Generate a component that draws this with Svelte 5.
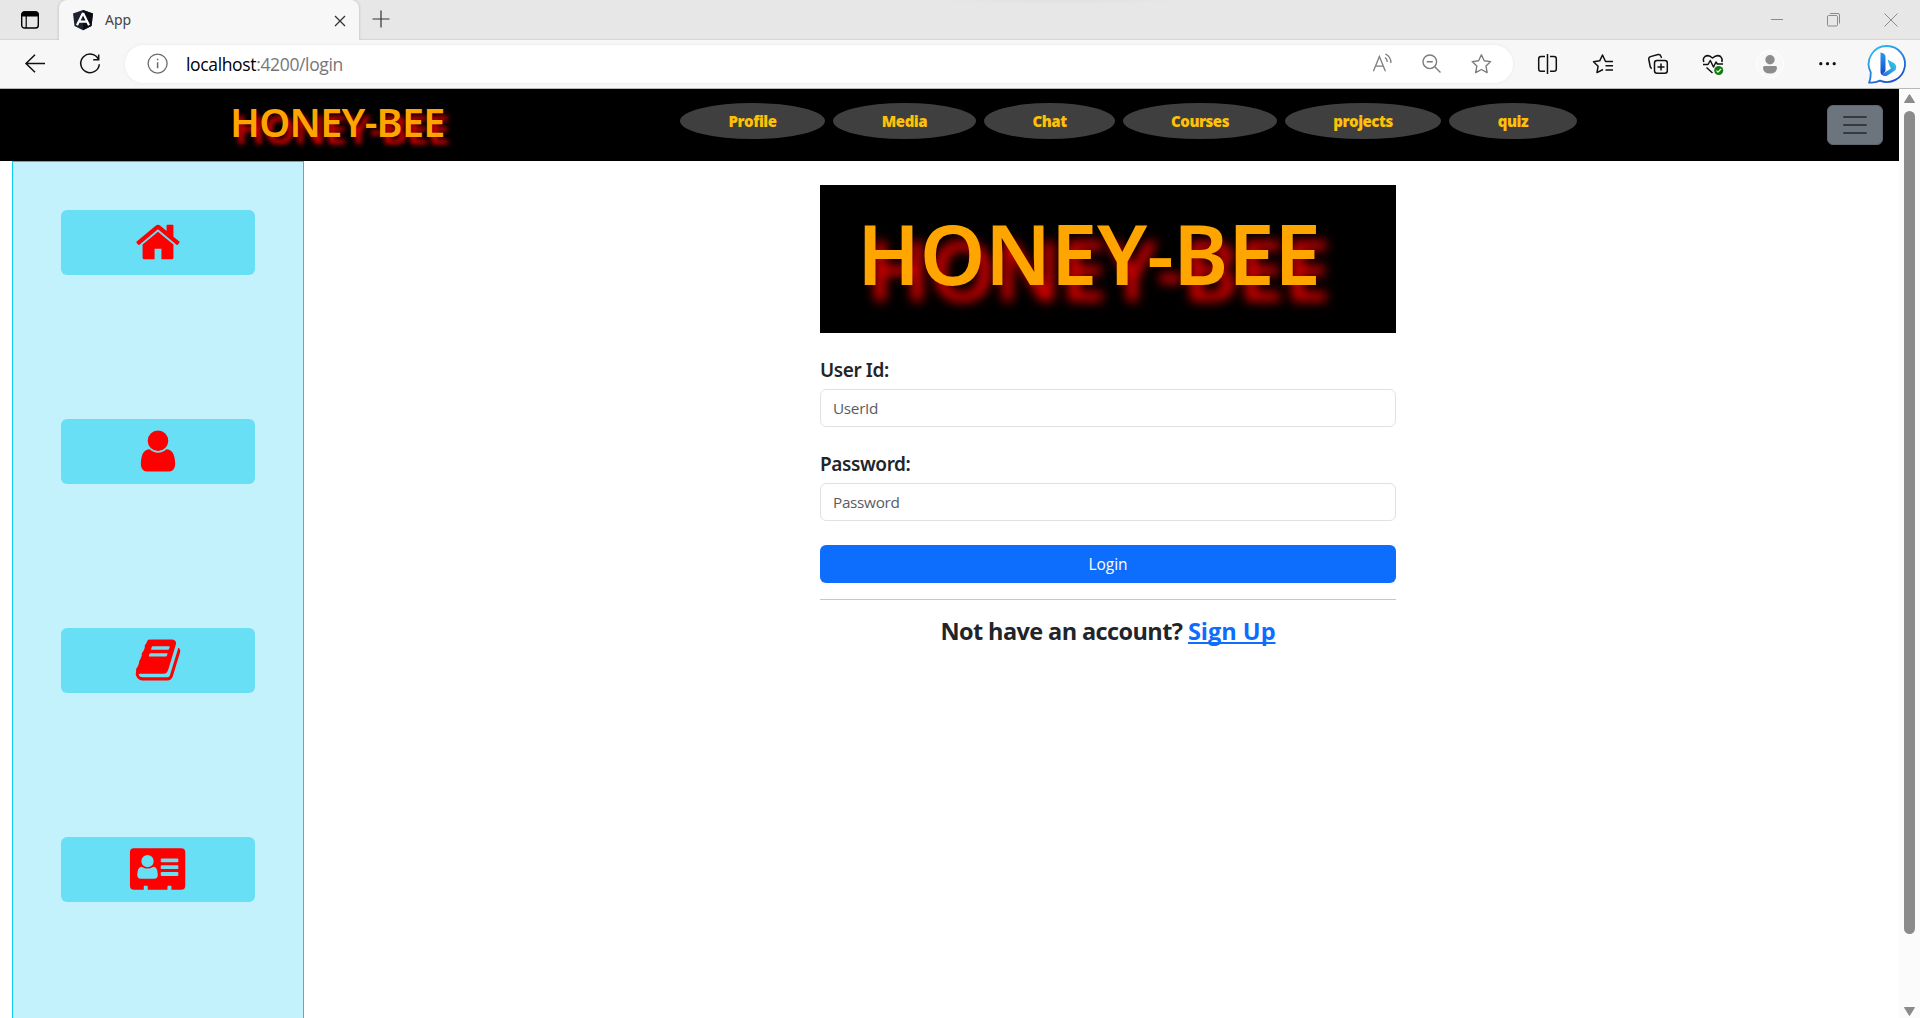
<script>
  const links = [
    { label: 'Profile', width: 145 },
    { label: 'Media', width: 143 },
    { label: 'Chat', width: 131 },
    { label: 'Courses', width: 154 },
    { label: 'projects', width: 156 },
    { label: 'quiz', width: 128 }
  ];

  const shortcuts = [
    {
      name: 'Home',
      box: '0 0 1792 1792',
      d: 'M1472 992v480q0 26-19 45t-45 19h-384v-384h-256v384h-384q-26 0-45-19t-19-45v-480q0-1 .5-3t.5-3l575-474 575 474q1 2 1 6zm223-69l-62 74q-8 9-21 11h-3q-13 0-21-7l-692-577-692 577q-12 8-24 7-13-2-21-11l-62-74q-8-10-7-23.5t11-21.5l719-599q32-26 76-26t76 26l244 204v-195q0-14 9-23t23-9h192q14 0 23 9t9 23v408l219 182q10 8 11 21.5t-7 23.5z'
    },
    {
      name: 'Account',
      box: '0 0 1792 1792',
      d: 'M1536 1399q0 109-62.5 187t-150.5 78h-854q-88 0-150.5-78t-62.5-187q0-85 8.5-160.5t31.5-152 58.5-131 94-89 134.5-34.5q131 128 313 128t313-128q76 0 134.5 34.5t94 89 58.5 131 31.5 152 8.5 160.5zm-256-887q0 159-112.5 271.5t-271.5 112.5-271.5-112.5-112.5-271.5 112.5-271.5 271.5-112.5 271.5 112.5 112.5 271.5z'
    },
    {
      name: 'Library',
      box: '0 0 1792 1792',
      d: 'M1703 478q40 57 18 129l-275 906q-19 64-76.5 107.5t-122.5 43.5h-923q-77 0-148.5-53.5t-99.5-131.5q-24-67-2-127 0-4 3-27t4-37q1-8-3-21.5t-3-19.5q2-11 8-21t16.5-23.5 16.5-23.5q23-38 45-91.5t30-91.5q3-10 .5-30t-.5-28q3-11 17-28t17-23q21-36 42-92t25-90q1-9-2.5-32t.5-28q4-13 22-30.5t22-22.5q19-26 42.5-84.5t27.5-96.5q1-8-3-25.5t-2-26.5q2-8 9-18t18-23 17-21q8-12 16.5-30.5t15-35 16-36 19.5-32 26.5-23.5 36-11.5 47.5 5.5l-1 3q38-9 51-9h761q74 0 114 56t18 130l-274 906q-36 119-71.5 153.5t-128.5 34.5h-869q-27 0-38 15-11 16-1 43 24 70 144 70h923q29 0 56-15.5t35-41.5l300-987q7-22 5-57 38 15 59 43zm-1064 2q-4 13 2 22.5t20 9.5h608q13 0 25.5-9.5t16.5-22.5l21-64q4-13-2-22.5t-20-9.5h-608q-13 0-25.5 9.5t-16.5 22.5zm-83 256q-4 13 2 22.5t20 9.5h608q13 0 25.5-9.5t16.5-22.5l21-64q4-13-2-22.5t-20-9.5h-608q-13 0-25.5 9.5t-16.5 22.5z'
    },
    {
      name: 'Contacts',
      box: '-4 -3.2 64 48.600',
      d: 'M4 0H52Q56 0 56 4V38Q56 42 52 42H42V38.7Q42 38 41.3 38H38.7Q38 38 38 38.7V42H18V38.7Q18 38 17.3 38H14.7Q14 38 14 38.7V42H4Q0 42 0 38V4Q0 0 4 0ZM17.8 7A6.1 6.1 0 0 0 17.8 19.4A6.1 6.1 0 0 0 17.8 7ZM12 18.7Q7.4 19 7.4 27Q7.4 31 11 31H24.6Q28.2 31 28.2 27Q28.2 19 23.6 18.7Q21 20.6 17.8 20.6Q14.6 20.6 12 18.7ZM32 10.5Q31.2 10.5 31.2 11.3V13.5Q31.2 14.3 32 14.3H48.2Q49 14.3 49 13.5V11.3Q49 10.5 48.2 10.5ZM32 17.3Q31.2 17.3 31.2 18.1V20.3Q31.2 21.1 32 21.1H48.2Q49 21.1 49 20.3V18.1Q49 17.3 48.2 17.3ZM32 24.2Q31.2 24.2 31.2 25V27.3Q31.2 28.1 32 28.1H48.2Q49 28.1 49 27.3V25Q49 24.2 48.2 24.2Z'
    }
  ];

  let userId = $state('');
  let password = $state('');
</script>

<div class="window">
  <div class="tabbar">
    <svg class="spaces" width="20" height="20" viewBox="0 0 20 20">
      <rect x="1.7" y="2" width="16.6" height="16" rx="2.8" fill="none" stroke="#000" stroke-width="1.4" />
      <path d="M1.5 6.5V4.5Q1.5 1.3 4.5 1.3H15.5Q18.5 1.3 18.5 4.5V6.5Z" fill="#000" />
      <path d="M6.2 6V18" stroke="#000" stroke-width="1.2" />
    </svg>
    <div class="tab">
      <svg width="22" height="22" viewBox="0 0 22 22">
        <path d="M11 1L21 4.400L19.500 17L11 21.200L2.500 17L1 4.400Z" fill="#1e2230" />
        <path d="M11 1L21 4.400L19.500 17L11 21.200Z" fill="#0a0c14" />
        <path d="M11 4L5 16.200M11 4L17 16.200M7.400 12.600H14.600" fill="none" stroke="#fff" stroke-width="2.200" />
      </svg>
      <span class="tab-title">App</span>
      <svg class="tab-close" width="12" height="12" viewBox="0 0 12 12">
        <path d="M1 1L11 11M11 1L1 11" stroke="#333" stroke-width="1.3" />
      </svg>
    </div>
    <svg class="plus" width="18" height="18" viewBox="0 0 18 18">
      <path d="M9 .5V17.5M.5 9H17.5" stroke="#333" stroke-width="1.2" />
    </svg>
    <div class="controls">
      <svg width="16" height="16" viewBox="0 0 16 16"><path d="M2 7.5H14" stroke="#8b8b8b" /></svg>
      <svg width="16" height="16" viewBox="0 0 16 16" fill="none" stroke="#8b8b8b">
        <rect x="1.5" y="3.5" width="10" height="10.5" rx="1.2" />
        <path d="M4 1.5H12Q13.5 1.5 13.5 3V11.5" />
      </svg>
      <svg width="16" height="16" viewBox="0 0 16 16"><path d="M1.500 1.500L14.500 14.500M14.500 1.500L1.500 14.500" stroke="#8b8b8b" /></svg>
    </div>
  </div>

  <div class="toolbar">
    <svg class="back" width="24" height="24" viewBox="0 0 24 24" fill="none" stroke="#111" stroke-width="1.5">
      <path d="M22 11.500H3M12 2.800L3 11.500L12 20.200" />
    </svg>
    <svg class="reload" width="24" height="24" viewBox="0 0 24 24" fill="none" stroke="#111" stroke-width="1.5">
      <path d="M20.500 7.500A9.300 9.300 0 1 0 21.300 12.200M20.700 2.500V7.800H15.200" />
    </svg>
    <div class="address">
      <svg width="22" height="22" viewBox="0 0 22 22" fill="none" stroke="#6b6b6b" stroke-width="1.3">
        <circle cx="10.6" cy="10.600" r="9.500" />
        <path d="M10.600 9.200V15.200M10.600 5.700V7.200" stroke-width="1.500" />
      </svg>
      <span class="url"><b>localhost</b>:4200/login</span>
      <div class="address-tools">
        <svg width="24" height="24" viewBox="0 0 24 24" fill="none" stroke="#7c7c7c" stroke-width="1.3">
          <path d="M2.400 19.300L8.400 4.500L14.400 19.300M4.400 14.200H12.400M14 5.500Q16.300 7 16.300 10M14.300 2Q20 4.500 20 11" />
        </svg>
        <svg width="24" height="24" viewBox="0 0 24 24" fill="none" stroke="#7c7c7c" stroke-width="1.4">
          <circle cx="9.800" cy="9.800" r="6.800" /><path d="M14.700 14.700L20.500 20.500M6.800 9.800H12.800" />
        </svg>
        <svg width="24" height="24" viewBox="0 0 24 24" fill="none" stroke="#7c7c7c" stroke-width="1.4" stroke-linejoin="round">
          <path d="M12.400 2.800L15.200 8.700L21.600 9.600L17 14.100L18.100 20.600L12.400 17.500L6.700 20.600L7.800 14.100L3.200 9.600L9.600 8.700Z" />
        </svg>
      </div>
    </div>
    <div class="actions">
      <svg width="24" height="24" viewBox="0 0 24 24" fill="none" stroke="#111" stroke-width="1.5">
        <path d="M9 4.500H5Q2.700 4.500 2.700 6.800V17Q2.700 19.300 5 19.300H9M14 4.500H18Q20.300 4.500 20.300 6.800V17Q20.300 19.300 18 19.300H14M11.500 2V22" />
      </svg>
      <svg width="24" height="24" viewBox="0 0 24 24" fill="none" stroke="#111" stroke-width="1.5" stroke-linejoin="round">
        <path d="M22 9.500H14.500L11.500 3L8.700 8.800L2.500 9.700L7.100 14.200L6 20.600L12 17.500M14.500 13.800H22M14.500 18H22" />
      </svg>
      <svg width="24" height="24" viewBox="0 0 24 24" fill="none" stroke="#111" stroke-width="1.5">
        <rect x="8.5" y="8.5" width="12.8" height="12.8" rx="2.5" />
        <path d="M15 11.500V18.500M11.500 15H18.500M5.800 16.500Q4.500 16 4.200 14.500L2.800 7.500Q2.400 5.300 4.500 4.600L12 2.600Q14.200 2.300 15 4.400L15.500 6" />
      </svg>
      <svg width="24" height="24" viewBox="0 0 24 24" fill="none" stroke="#111" stroke-width="1.5" stroke-linejoin="round">
        <path d="M2.800 10Q1.500 6.500 4 4.500Q7.500 2.200 11.500 6Q16 2.200 19.500 4.500Q22 6.800 20.800 10M2 12.500H7L9.300 8.500L12.500 15L15 10L16.300 12H22M5.500 15.500L11.500 21" />
        <circle cx="17.7" cy="18.5" r="4.5" fill="#107c10" stroke="none" />
        <path d="M15.500 18.700L17 20.200L20 17" stroke="#fff" stroke-width="1.2" />
      </svg>
      <svg class="avatar" width="28" height="28" viewBox="0 0 28 28">
        <circle cx="14" cy="14" r="13.5" fill="#f8f8f8" stroke="#fff" />
        <circle cx="14" cy="9.7" r="4.7" fill="#8c8c8c" />
        <path d="M8.500 16H19.500Q21 16 21 17.500Q21 23.500 14 23.500Q7 23.500 7 17.500Q7 16 8.500 16Z" fill="#8c8c8c" />
      </svg>
      <svg class="dots" width="24" height="24" viewBox="0 0 24 24" fill="#111">
        <circle cx="4.8" cy="11.7" r="1.6" /><circle cx="11.5" cy="11.7" r="1.6" /><circle cx="18.2" cy="11.7" r="1.6" />
      </svg>
      <svg class="bing" width="40" height="40" viewBox="0 0 40 40">
        <defs>
          <linearGradient id="ring" x1="0" y1="0" x2=".6" y2="1"><stop offset="0" stop-color="#2fc8f4" /><stop offset="1" stop-color="#1b50d0" /></linearGradient>
          <linearGradient id="stem" x1="0" y1="0" x2="0" y2="1"><stop offset="0" stop-color="#2b9af3" /><stop offset="1" stop-color="#1646c8" /></linearGradient>
          <linearGradient id="bowl" x1="1" y1="0" x2="0" y2="1"><stop offset="0" stop-color="#35d8e0" /><stop offset="1" stop-color="#2368e8" /></linearGradient>
        </defs>
        <path d="M20 2A18 18 0 1 1 13 36.600Q8 39 2.200 38.500Q3.800 34 3.800 28.500A18 18 0 0 1 20 2Z" fill="#fff" stroke="url(#ring)" stroke-width="1.8" />
        <path d="M13.500 8.500Q18.500 9.300 18.500 13V27L15 31Q13.500 30 13.500 28Z" fill="url(#stem)" />
        <path d="M20.500 15.500L27 19Q30.500 21.500 28.500 26L20.500 31.500Q17 33 14.500 30.500L24 24.500L22.500 21.500Z" fill="url(#bowl)" />
      </svg>
    </div>
  </div>

  <div class="viewport">
    <div class="page">
      <header>
        <span class="brand">HONEY-BEE</span>
        <nav>
          {#each links as link}
            <a href="#top" style:width="{link.width}px">{link.label}</a>
          {/each}
        </nav>
        <button class="toggler" aria-label="Menu"><i></i><i></i><i></i></button>
      </header>
      <div class="body">
        <aside>
          {#each shortcuts as item}
            <button aria-label={item.name}>
              <svg viewBox={item.box} height="48"><path fill-rule="evenodd" d={item.d} /></svg>
            </button>
          {/each}
        </aside>
        <main>
          <form>
            <div class="banner">HONEY-BEE</div>
            <label for="user">User Id:</label>
            <input id="user" type="text" placeholder="UserId" bind:value={userId} />
            <label for="pass">Password:</label>
            <input id="pass" type="password" placeholder="Password" bind:value={password} />
            <button class="login" type="button">Login</button>
            <hr />
            <h4>Not have an account? <a href="#top">Sign Up</a></h4>
          </form>
        </main>
      </div>
    </div>
    <div class="scrollbar">
      <svg width="11" height="9" viewBox="0 0 11 9"><path d="M5.500 .5L10.500 8.500H.5Z" fill="#8b8b8b" stroke="#8b8b8b" stroke-linejoin="round" /></svg>
      <div class="thumb"></div>
      <svg width="11" height="9" viewBox="0 0 11 9"><path d="M5.500 8.500L10.500 .5H.5Z" fill="#8b8b8b" stroke="#8b8b8b" stroke-linejoin="round" /></svg>
    </div>
  </div>
</div>

<style>
  :global(body) { overflow: hidden; }
  * { box-sizing: border-box; }
  svg { display: block; flex: none; }
  .window {
    width: 1920px; height: 1018px; display: flex; flex-direction: column; overflow: hidden;
    font-family: "Open Sans", "Noto Sans", sans-serif; background: #fff; color: #212529;
  }

  .tabbar {
    height: 40px; flex: none; display: flex; border-bottom: 1px solid #d6d6d6;
    background: radial-gradient(ellipse 130px 5px at 1062px 0, #e1e1e1, transparent) #e7e7e7;
  }
  .spaces { margin: 10px 0 0 20px; }
  .tab {
    width: 300px; height: 40px; margin-left: 19px; padding: 0 13px; display: flex; align-items: center;
    background: #f7f7f7; border-radius: 8px 8px 0 0; box-shadow: 0 0 3px rgba(0, 0, 0, .22); clip-path: inset(0 -4px 0 -4px);
  }
  .tab-title { margin: -2px 0 0 11px; font: 14px "Noto Sans", sans-serif; color: #444; }
  .tab-close { margin: 1px 0 0 auto; }
  .plus { margin: 10px 0 0 13px; }
  .controls { margin: 12px 21px 0 auto; display: flex; gap: 41px; }

  .toolbar { height: 49px; flex: none; display: flex; align-items: flex-start; background: #f7f7f7; border-bottom: 1px solid #b8b8b8; }
  .back { margin: 12px 0 0 23px; }
  .reload { margin: 12px 0 0 31px; }
  .address {
    width: 1388px; height: 38px; margin: 5px 0 0 23px; padding: 0 20px 0 22px; display: flex; align-items: center;
    background: #fff; border-radius: 19px; box-shadow: 0 0 4px rgba(0, 0, 0, .06);
  }
  .url { margin: -1px 0 0 17px; font-size: 17.5px; letter-spacing: -.35px; line-height: 38px; color: #767676; }
  .url b { font-weight: 400; color: #000; }
  .address-tools { margin-left: auto; display: flex; gap: 25px; }
  .actions { display: flex; align-items: center; gap: 31px; height: 48px; margin-left: 23px; }
  .dots { margin-left: 1px; }
  .bing { margin-left: -4px; }

  .viewport { flex: 1; display: flex; min-height: 0; }
  .page { flex: 1; display: flex; flex-direction: column; }
  header { height: 72px; flex: none; display: flex; align-items: flex-start; background: #000; padding: 0 16px 0 230px; }
  .brand {
    width: 450px; font: 600 39.5px/67px "Noto Sans", sans-serif; letter-spacing: -.7px;
    color: orange; text-shadow: 5px 7px 5px #dc0000;
  }
  nav { display: flex; gap: 8px; margin-top: 14px; }
  nav a {
    height: 36px; border-radius: 50%; background: #3f3f3f; color: #ffc107; text-align: center; text-decoration: none;
    font-weight: 800; font-size: 15px; line-height: 37px; letter-spacing: -.45px;
  }
  .toggler {
    width: 56px; height: 40px; margin: 16px 0 0 auto; padding: 0; display: flex; flex-direction: column;
    align-items: center; justify-content: center; gap: 6px; background: #6c757d; border: 1px solid #5f676e; border-radius: 6px;
  }
  .toggler i { width: 24px; height: 2px; border-radius: 1px; background: #353a3f; }

  .body { flex: 1; display: flex; gap: 13px; padding-left: 12px; min-height: 0; }
  aside {
    width: 292px; padding-top: 48px; display: flex; flex-direction: column; align-items: center; gap: 144px;
    background: #c3f2fc; border: 1px solid #0dcaf0; border-bottom: 0;
  }
  aside button {
    width: 194px; height: 65px; flex: none; padding: 8px 0 0; display: flex; justify-content: center; align-items: flex-start;
    background: #69dff6; border: 0; border-radius: 6px; fill: red;
  }
  main { flex: 1; display: flex; justify-content: center; padding-top: 24px; }
  form { width: 576px; display: flex; flex-direction: column; }
  .banner {
    height: 148px; margin-bottom: 24px; padding-left: 37px; background: #000; color: orange;
    font: 600 83.5px/135px "Noto Sans", sans-serif; letter-spacing: -.4px; text-shadow: 10px 16px 11px #d80000;
  }
  label { margin-bottom: 8px; font: 600 19px/24px "Noto Sans", sans-serif; letter-spacing: -.4px; padding-top: 1px; height: 24px; }
  input {
    height: 38px; margin: 0 0 24px; padding: 0 12px; border: 1px solid #dee2e6; border-radius: 6px; background: #fff;
    font: 15.3px "Open Sans", sans-serif; letter-spacing: -.3px; color: #212529; outline: 0;
  }
  input::placeholder { color: #595c5f; opacity: 1; }
  .login {
    height: 38px; padding: 0; border: 0; border-radius: 6px; background: #0d6efd; color: #fff; font: 15.5px "Open Sans", sans-serif;
  }
  hr { width: 100%; height: 1px; margin: 16px 0; border: 0; background: #c4c6c7; }
  h4 { margin: 0; text-align: center; font-size: 23.5px; font-weight: 700; line-height: 31px; letter-spacing: -.6px; }
  h4 a { color: #0d6efd; letter-spacing: 0; text-decoration: underline; text-decoration-thickness: 2px; text-underline-offset: 2px; text-decoration-skip-ink: none; }

  .scrollbar { width: 21px; flex: none; display: flex; flex-direction: column; padding: 5px 5px 2px; background: #fbfbfb; }
  .thumb { width: 11px; height: 823px; margin: 8px 0 auto; border-radius: 6px; background: #8b8b8b; }
</style>
